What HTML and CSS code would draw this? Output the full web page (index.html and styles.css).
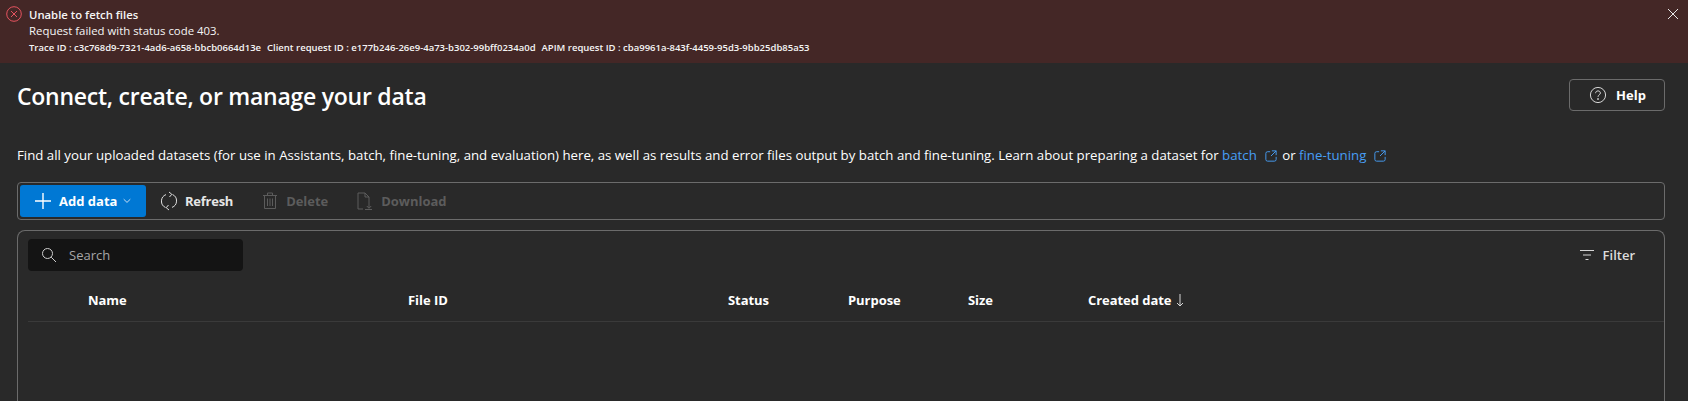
FILE: index.html
```html
<!DOCTYPE html>
<html lang="en">
<head>
<meta charset="utf-8">
<title>Data files</title>
<link rel="stylesheet" href="styles.css">
</head>
<body>
<section class="banner">
  <svg class="banner-icon" width="16" height="16" viewBox="0 0 16 16" fill="none" stroke="#e5535f" stroke-width="1"><circle cx="8" cy="8" r="7.3"/><path d="M5 5l6 6M11 5l-6 6"/></svg>
  <div class="banner-text">
    <div class="banner-title">Unable to fetch files</div>
    <div class="banner-msg">Request failed with status code 403.</div>
    <div class="banner-ids"><span>Trace ID : c3c768d9-7321-4ad6-a658-bbcb0664d13e</span><span>Client request ID : e177b246-26e9-4a73-b302-99bff0234a0d</span><span>APIM request ID : cba9961a-843f-4459-95d3-9bb25db85a53</span></div>
  </div>
  <svg class="banner-close" width="12" height="12" viewBox="0 0 12 12" fill="none" stroke="#e8e8e8" stroke-width="1"><path d="M1 1l10 10M11 1L1 11"/></svg>
</section>
<main class="page">
  <header class="page-head">
    <h1>Connect, create, or manage your data</h1>
    <button class="help">
      <svg width="20" height="20" viewBox="0 0 20 20" fill="none" stroke="#d6d6d6" stroke-width="1"><circle cx="10" cy="10" r="7.6"/><path d="M7.6 8.2c0-1.4 1-2.3 2.4-2.3s2.4.9 2.4 2.1c0 1.9-2.4 1.9-2.4 3.800"/><circle cx="10" cy="14" r=".5" fill="#d6d6d6"/></svg>
      <span>Help</span>
    </button>
  </header>
  <p class="intro">Find all your uploaded datasets (for use in Assistants, batch, fine-tuning, and evaluation) here, as well as results and error files output by batch and fine-tuning. Learn about preparing a dataset for <a href="#">batch<svg class="ext" width="12" height="12" viewBox="0 0 14 14" fill="none" stroke="#479ef5" stroke-width="1.100"><path d="M6 2H3a2 2 0 0 0-2 2v7a2 2 0 0 0 2 2h8a2 2 0 0 0 2-2V8M8 1h5v5M13 1L7 7"/></svg></a> or <a href="#">fine-tuning<svg class="ext" width="12" height="12" viewBox="0 0 14 14" fill="none" stroke="#479ef5" stroke-width="1.100"><path d="M6 2H3a2 2 0 0 0-2 2v7a2 2 0 0 0 2 2h8a2 2 0 0 0 2-2V8M8 1h5v5M13 1L7 7"/></svg></a></p>
  <div class="toolbar">
    <button class="tool primary">
      <svg width="18" height="18" viewBox="0 0 18 18" stroke="#fff" stroke-width="1.4"><path d="M9 1v16M1 9h16"/></svg>
      <span class="add-label">Add data</span>
      <svg width="8" height="6" viewBox="0 0 8 6" fill="none" stroke="#dbe9f6" stroke-width=".9"><path d="M.7 1.2L4 4.4l3.3-3.2"/></svg>
    </button>
    <button class="tool refresh">
      <svg width="18" height="20" viewBox="0 0 18 20" fill="none" stroke="#e0e0e0" stroke-width="1"><path d="M6 3.600A7 7 0 0 0 5.500 16.500M12 16.400A7 7 0 0 0 12.500 3.500M9 1l2.800 2.300L9.500 6M9 19l-2.800-2.300L8.500 14"/></svg>
      <span>Refresh</span>
    </button>
    <button class="tool off delete">
      <svg width="14" height="18" viewBox="0 0 14 18" fill="none" stroke="#5c5c5c" stroke-width="1"><path d="M0 3.500h14M4.500 3.500V1h5v2.500M1.500 3.500v13h11v-13M4.500 6.500v7.500M7 6.500v7.500M9.500 6.500v7.500"/></svg>
      <span>Delete</span>
    </button>
    <button class="tool off download">
      <svg width="16" height="18" viewBox="0 0 16 18" fill="none" stroke="#5c5c5c" stroke-width="1"><path d="M6 17H1V1h7l4 4v5M8 1v4h4M12 10v6M9.800 14l2.200 2.300 2.200-2.300M8 17.500h7"/></svg>
      <span>Download</span>
    </button>
  </div>
  <section class="card">
    <div class="card-top">
      <div class="search">
        <svg width="16" height="16" viewBox="0 0 16 16" fill="none" stroke="#cfcfcf" stroke-width="1"><circle cx="6.500" cy="6.500" r="5"/><path d="M10.200 10.200L15 15"/></svg>
        <span>Search</span>
      </div>
      <div class="filter">
        <svg width="14" height="12" viewBox="0 0 14 12" fill="none" stroke="#d6d6d6" stroke-width="1"><path d="M0 1.500h14M3 6h8M5.500 10.500h3"/></svg>
        <span>Filter</span>
      </div>
    </div>
    <div class="table-head">
      <span>Name</span>
      <span>File ID</span>
      <span>Status</span>
      <span>Purpose</span>
      <span>Size</span>
      <span class="sorted">Created date<svg width="8" height="14" viewBox="0 0 8 14" fill="none" stroke="#d6d6d6" stroke-width="1"><path d="M4 1v12M1 10l3 3 3-3"/></svg></span>
    </div>
  </section>
</main>
</body>
</html>
```

FILE: styles.css
```css
* { box-sizing: border-box; }
html, body { height: 100%; }
body {
  margin: 0;
  overflow: hidden;
  background: #292929;
  color: #fff;
  font-family: "Open Sans", "Noto Sans", sans-serif;
  display: flex;
  flex-direction: column;
}
svg { display: block; flex: none; }
button { font: inherit; color: inherit; background: none; border: 0; padding: 0; }

.banner {
  flex: none;
  height: 63px;
  background: #442726;
  display: flex;
  align-items: flex-start;
  padding: 6px 9px 0 6px;
  color: #f5f5f5;
}
.banner-icon { margin-right: 7px; }
.banner-text { flex: 1; }
.banner-title { font-size: 11.3px; font-weight: 600; line-height: 17px; }
.banner-msg { font-size: 11.4px; line-height: 16px; }
.banner-ids { font-size: 9.5px; font-weight: 600; line-height: 17px; display: flex; gap: 6px; }
.banner-close { margin-top: 2px; }

.page {
  flex: 1;
  min-height: 0;
  display: flex;
  flex-direction: column;
  padding: 16px 23px 0 17px;
}
.page-head { height: 36px; display: flex; justify-content: space-between; align-items: flex-start; }
h1 { margin: 0; font-size: 23px; font-weight: 600; line-height: 34px; letter-spacing: -.25px; }
.help {
  width: 96px;
  height: 32px;
  border: 1px solid #6b6b6b;
  border-radius: 4px;
  display: flex;
  align-items: center;
  justify-content: center;
  gap: 8px;
  font-size: 13px;
  font-weight: 700;
}
.intro { margin: 30px 0 0; font-size: 13.25px; line-height: 20px; color: #fff; white-space: nowrap; }
.intro a { color: #479ef5; text-decoration: none; }
.ext { display: inline-block; margin: 0 2px 0 8px; vertical-align: -2px; }

.toolbar {
  flex: none;
  margin-top: 17px;
  height: 38px;
  border: 1px solid #6b6b6b;
  border-radius: 4px;
  display: flex;
  align-items: center;
  padding: 0 2px;
}
.tool { display: flex; align-items: center; font-size: 13px; font-weight: 700; }
.primary {
  width: 126px;
  height: 32px;
  background: #0078d4;
  border-radius: 3px;
  padding-left: 14px;
}
.add-label { margin: 0 6px 0 7px; }
.refresh { margin-left: 14px; gap: 7px; color: #e6e6e6; letter-spacing: -.25px; }
.off { color: #5c5c5c; }
.delete { margin-left: 30px; gap: 9px; letter-spacing: -.05px; }
.download { margin-left: 29px; gap: 8px; }

.card {
  flex: 1;
  min-height: 0;
  margin-top: 10px;
  border: 1px solid #6b6b6b;
  border-bottom: 0;
  border-radius: 8px 8px 0 0;
  padding: 8px 0 0 10px;
}
.card-top { display: flex; justify-content: space-between; align-items: center; }
.search {
  width: 215px;
  height: 32px;
  background: #141414;
  border-radius: 4px;
  display: flex;
  align-items: center;
  gap: 12px;
  padding-left: 13px;
  font-size: 13px;
  color: #a6a6a6;
}
.filter { display: flex; align-items: center; gap: 9px; padding-right: 29px; font-size: 13px; font-weight: 600; color: #dcdcdc; }
.table-head {
  margin-top: 8px;
  height: 43px;
  border-bottom: 1px solid #3a3a3a;
  display: grid;
  grid-template-columns: 320px 320px 120px 120px 120px 1fr;
  align-items: center;
  padding-left: 60px;
  font-size: 13px;
  font-weight: 700;
  letter-spacing: -.05px;
}
.sorted { display: flex; align-items: center; gap: 5px; }
```
